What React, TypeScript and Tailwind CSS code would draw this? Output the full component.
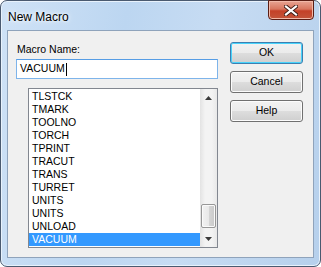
import React from "react";

const items = [
  "TLSTCK",
  "TMARK",
  "TOOLNO",
  "TORCH",
  "TPRINT",
  "TRACUT",
  "TRANS",
  "TURRET",
  "UNITS",
  "UNITS",
  "UNLOAD",
  "VACUUM",
];

function DlgButton({ label, isDefault }: { label: string; isDefault?: boolean }) {
  return (
    <div
      className={
        "h-[22px] w-[73px] rounded-[3px] border flex items-center justify-center text-[10.5px] text-black bg-[linear-gradient(#f2f2f2_0%,#ebebeb_50%,#dddddd_51%,#cfcfcf_100%)] " +
        (isDefault
          ? "border-[#3c7fb1] shadow-[inset_0_0_0_1px_#48d3fb]"
          : "border-[#707070] shadow-[inset_0_0_0_1px_#fcfcfc]")
      }
    >
      {label}
    </div>
  );
}

function CloseIcon() {
  return (
    <svg width="14" height="11" viewBox="0 0 14 11">
      <path
        d="M2 1.5 L12 9.5 M12 1.5 L2 9.5"
        stroke="#3b1a14"
        strokeWidth="4"
        strokeLinecap="square"
      />
      <path
        d="M2 1.5 L12 9.5 M12 1.5 L2 9.5"
        stroke="#ffffff"
        strokeWidth="2.2"
        strokeLinecap="square"
      />
    </svg>
  );
}

export default function App() {
  return (
    <div
      className="w-[321px] h-[267px] bg-white overflow-hidden"
      style={{ fontFamily: '"Liberation Sans", Arial, sans-serif' }}
    >
      {/* window frame */}
      <div className="w-[321px] h-[267px] rounded-t-[7px] rounded-b-[7px] border border-[#4a5a70] bg-[linear-gradient(100deg,#cfe2f6_0%,#bcd6f1_35%,#c7dcf3_60%,#b6d0ec_100%)] flex flex-col shadow-[inset_0_0_0_1px_#e8f2fc]">
        {/* title bar */}
        <div className="h-[29px] flex items-start justify-between pl-[7px] pr-[6px]">
          <span className="text-[12px] text-black mt-[7px] [text-shadow:0_0_6px_#ffffff,0_0_3px_#ffffff]">
            New Macro
          </span>
          <div className="mt-[-1px] h-[20px] w-[46px] rounded-b-[4px] border border-[#5a1d14] bg-[linear-gradient(#e8a493_0%,#d8765f_45%,#c44128_55%,#c3543a_100%)] shadow-[inset_0_0_0_1px_#f1b8a8] flex items-center justify-center">
            <CloseIcon />
          </div>
        </div>

        {/* client area */}
        <div className="ml-[6px] mr-[6px] h-[228px] border border-[#8fa3bb] bg-[#f0f0f0] flex gap-[12px] pl-[8px] pt-[11px]">
          <div className="w-[202px] flex flex-col">
            <div className="h-[17px] text-[10.5px] leading-[13px] pt-[1px] pl-[1px] text-black">
              Macro Name:
            </div>
            <div className="h-[20px] border border-[#7eb4ea] border-t-[#569de5] bg-white flex items-center pl-[3px] text-[10.5px] text-black">
              VACUUM
              <span className="ml-[1px] inline-block w-[1px] h-[13px] bg-black" />
            </div>
            <div className="mt-[9px] ml-[12px] w-[190px] h-[160px] border border-[#828790] bg-white flex">
              <div className="flex-1 pt-[1px]">
                {items.map((it, i) => (
                  <div
                    key={i}
                    className={
                      "h-[13px] leading-[13px] text-[10.5px] pl-[3px] " +
                      (i === items.length - 1
                        ? "bg-[#3399ff] text-white"
                        : "text-black")
                    }
                  >
                    {it}
                  </div>
                ))}
              </div>
              {/* scrollbar */}
              <div className="w-[17px] bg-[linear-gradient(90deg,#e3e3e3,#f3f3f3_30%,#f3f3f3_70%,#e8e8e8)] flex flex-col">
                <div className="h-[17px] flex items-center justify-center">
                  <svg width="7" height="4" viewBox="0 0 7 4">
                    <path d="M0 4 L3.5 0 L7 4 Z" fill="#3a3a3a" />
                  </svg>
                </div>
                <div className="flex-1" />
                <div className="h-[24px] mx-[1px] rounded-[2px] border border-[#979797] bg-[linear-gradient(90deg,#f2f2f2,#e9e9e9_50%,#d6d6d6_51%,#c9c9c9)] shadow-[inset_0_0_0_1px_#fafafa]" />
                <div className="h-[17px] mt-[2px] flex items-center justify-center">
                  <svg width="7" height="4" viewBox="0 0 7 4">
                    <path d="M0 0 L3.5 4 L7 0 Z" fill="#3a3a3a" />
                  </svg>
                </div>
              </div>
            </div>
          </div>

          <div className="flex flex-col gap-[7px]">
            <DlgButton label="OK" isDefault />
            <DlgButton label="Cancel" />
            <DlgButton label="Help" />
          </div>
        </div>
      </div>
    </div>
  );
}
